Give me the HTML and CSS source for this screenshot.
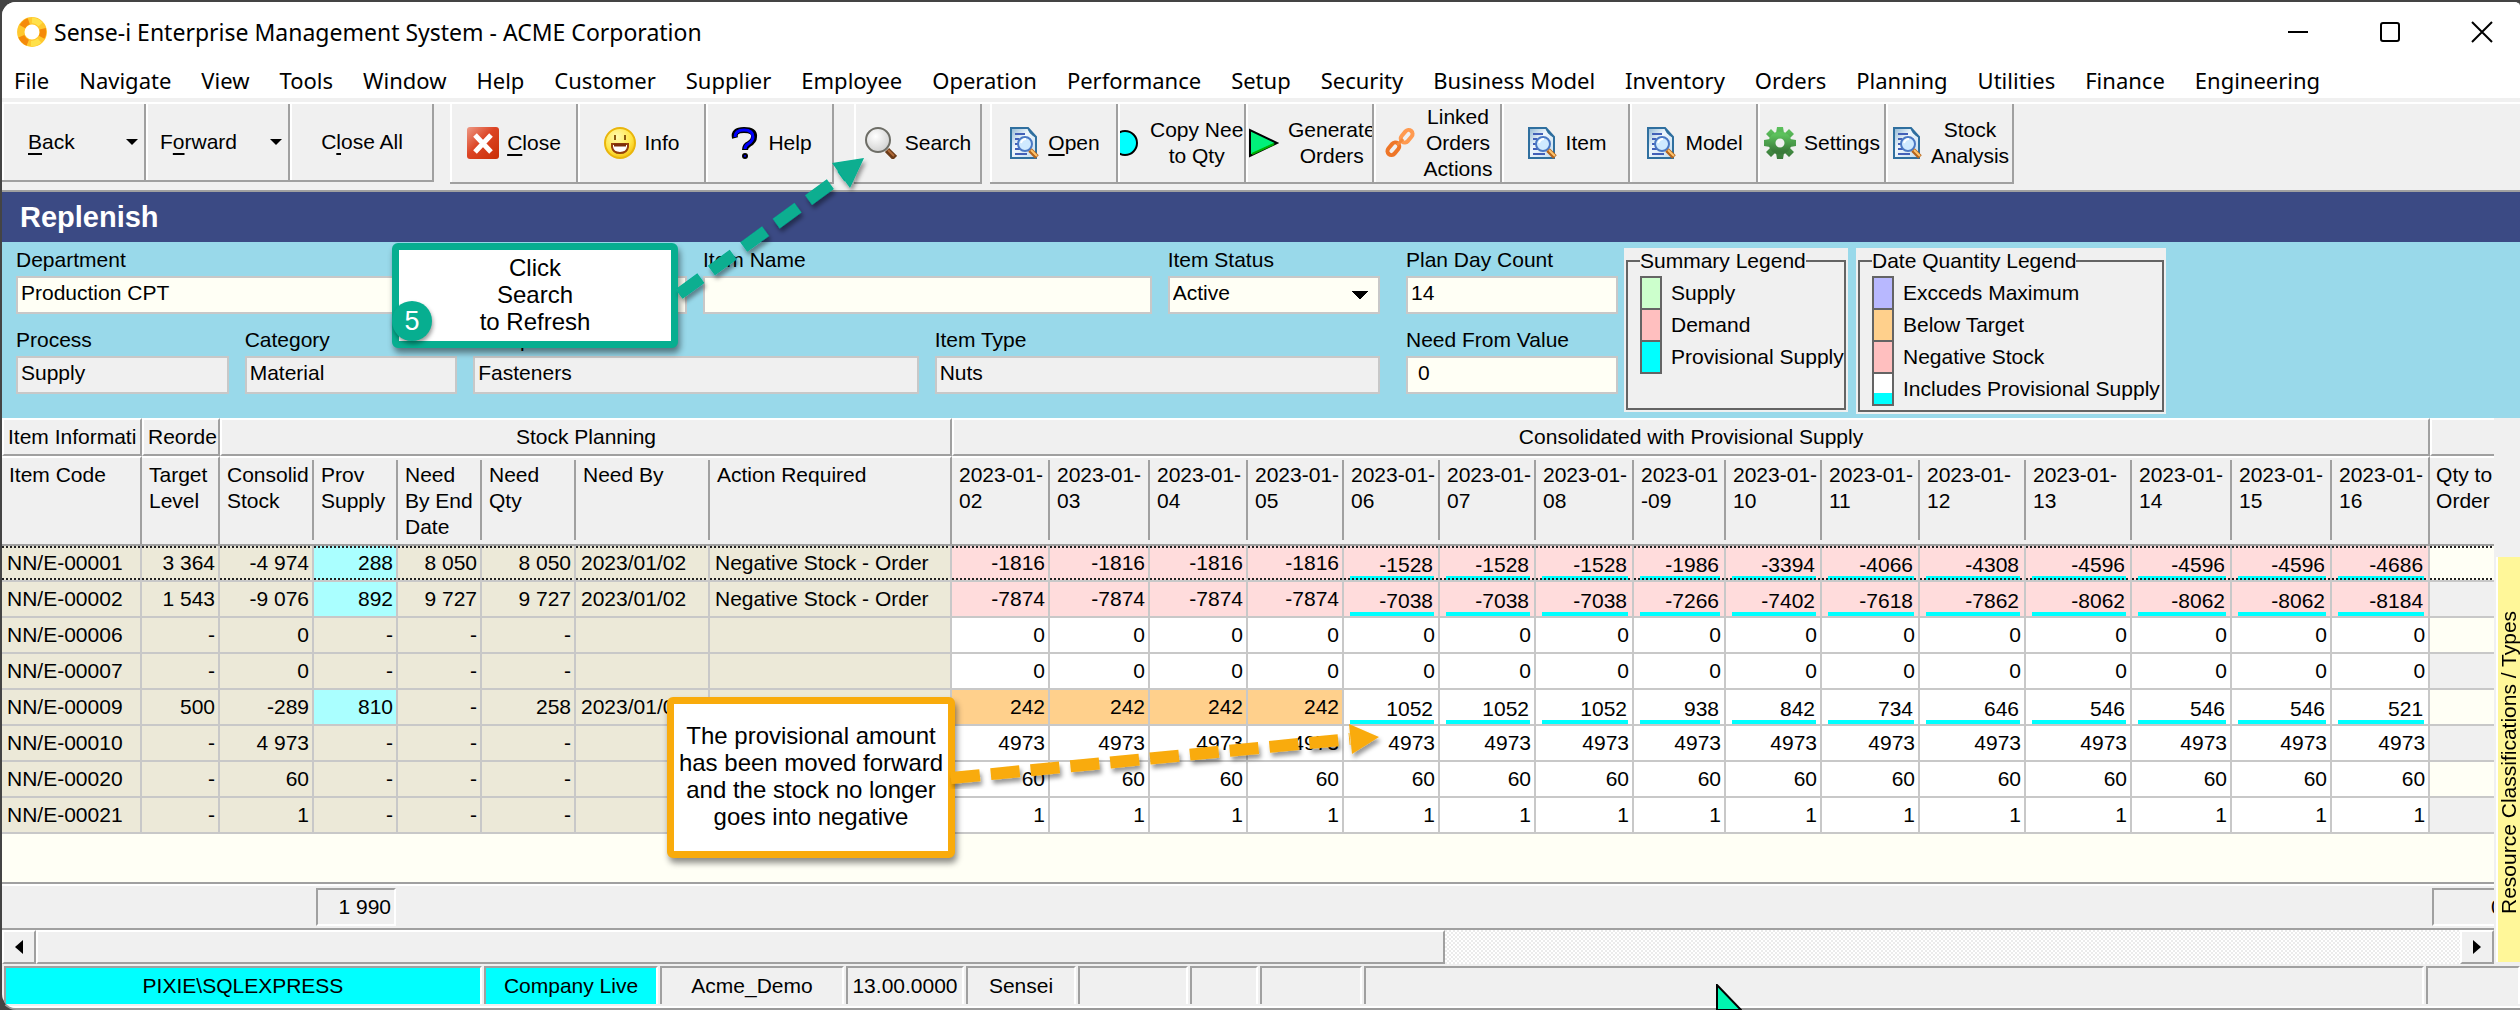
FILE: index.html
```
<!DOCTYPE html>
<html lang="en">
<head>
<meta charset="utf-8">
<title>Sense-i Enterprise Management System - ACME Corporation</title>
<link rel="stylesheet" href="styles.css">
</head>
<body>
<svg class="defs" aria-hidden="true">
  <defs>
    <linearGradient id="page" x1="0" y1="0" x2="1" y2="1"><stop offset="0" stop-color="#8fb6d3"/><stop offset=".4" stop-color="#eef6fc"/><stop offset="1" stop-color="#c4ddef"/></linearGradient>
    <linearGradient id="red" x1="0" y1="0" x2="1" y2="1"><stop offset="0" stop-color="#ee9a86"/><stop offset=".45" stop-color="#dc4424"/><stop offset="1" stop-color="#c92f06"/></linearGradient>
    <radialGradient id="face" cx=".4" cy=".3" r=".8"><stop offset="0" stop-color="#fffbb0"/><stop offset=".6" stop-color="#ffe545"/><stop offset="1" stop-color="#f2b705"/></radialGradient>
    <linearGradient id="green" x1="0" y1="0" x2="0" y2="1"><stop offset="0" stop-color="#5cc15c"/><stop offset="1" stop-color="#3a7a3a"/></linearGradient>
    <radialGradient id="glass" cx=".4" cy=".35" r=".7"><stop offset="0" stop-color="#fff"/><stop offset="1" stop-color="#cfcfcf"/></radialGradient>
    <filter id="shadow" x="-10%" y="-10%" width="125%" height="130%"><feDropShadow dx="2" dy="4" stdDeviation="2" flood-color="#000" flood-opacity=".4"/></filter>
  </defs>
  <symbol id="doc" viewBox="0 0 32 32">
    <path d="M3 1h17l8 9v21H3z" fill="url(#page)" stroke="#2f6f9f" stroke-width="2"/>
    <path d="M20 1c1 4 3 7 8 9" fill="#2f6f9f" stroke="#2f6f9f"/>
    <path d="M7 7h10M7 12h4M7 17h4M7 22h5M7 27h12" stroke="#4260b8" stroke-width="2"/>
    <circle cx="17" cy="17" r="7" fill="#cfeaff" stroke="#4a78c4" stroke-width="2"/>
    <path d="M13 16c1-3 3-4 5-4" stroke="#fff" stroke-width="2" fill="none"/>
    <path d="M22 23l7 7" stroke="#b5651d" stroke-width="5"/><path d="M23 23l6 6" stroke="#ffc56b" stroke-width="2"/>
  </symbol>
</svg>

<div class="window">
  <header class="titlebar">
    <svg class="logo" viewBox="0 0 30 30"><circle cx="15" cy="15" r="10.500" fill="none" stroke="#ffc82e" stroke-width="7"/><path d="M6 10a11 11 0 0 1 6-5M25 12a11 11 0 0 1-1 8M5 19a11 11 0 0 0 6 6" fill="none" stroke="#f58a0a" stroke-width="6"/><path d="M15 4a11 11 0 0 1 8 4M14 26a11 11 0 0 0 8-3" fill="none" stroke="#ffe14a" stroke-width="5"/></svg>
    <h1>Sense-i Enterprise Management System - ACME Corporation</h1>
    <div class="controls">
      <button aria-label="Minimize"><svg viewBox="0 0 22 22"><path d="M1 11h20" /></svg></button>
      <button aria-label="Maximize"><svg viewBox="0 0 22 22"><rect x="2" y="2" width="18" height="18" rx="2"/></svg></button>
      <button aria-label="Close window"><svg viewBox="0 0 22 22"><path d="M1 1l20 20M21 1L1 21"/></svg></button>
    </div>
  </header>

  <nav class="menu">
    <a href="#">File</a><a href="#">Navigate</a><a href="#">View</a><a href="#">Tools</a><a href="#">Window</a><a href="#">Help</a><a href="#">Customer</a><a href="#">Supplier</a><a href="#">Employee</a><a href="#">Operation</a><a href="#">Performance</a><a href="#">Setup</a><a href="#">Security</a><a href="#">Business Model</a><a href="#">Inventory</a><a href="#">Orders</a><a href="#">Planning</a><a href="#">Utilities</a><a href="#">Finance</a><a href="#">Engineering</a>
  </nav>

  <div class="toolbar">
    <div class="group history">
      <button class="drop"><span><u>B</u>ack</span><i></i></button>
      <button class="drop"><span>F<u>o</u>rward</span><i></i></button>
      <button><span>C<u>l</u>ose All</span></button>
    </div>
    <div class="group">
      <button><svg viewBox="0 0 32 32"><rect width="32" height="32" rx="3" fill="url(#red)"/><path d="M8 8l16 17M24 8L8 25" stroke="#fff" stroke-width="5"/></svg><span><u>C</u>lose</span></button>
      <button><svg viewBox="0 0 32 32"><circle cx="16" cy="16" r="15" fill="url(#face)" stroke="#e9b50c" stroke-width="2"/><path d="M11 8v5M21 8v5" stroke="#8a5a10" stroke-width="2"/><path d="M8 17h16v3q-1 6-8 6t-8-6z" fill="#fff" stroke="#96400c" stroke-width="2"/><path d="M10 18h12" stroke="#7c2c08" stroke-width="3"/></svg><span>Info</span></button>
      <button><svg viewBox="0 0 32 32"><path d="M7 11Q5 3 16 3t10 7q0 4-5 7-4 2-4 6" fill="none" stroke="#000" stroke-width="6"/><path d="M7 10Q7 3 16 3t9 7q0 4-5 7-3 2-3 5" fill="none" stroke="#00f" stroke-width="3"/><circle cx="17" cy="29" r="3"/><circle cx="17" cy="29" r="1" fill="#00f"/></svg><span>Help</span></button>
    </div>
    <div class="group">
      <button><svg viewBox="0 0 32 32"><path d="M22 23l8 8" stroke="#6b3b18" stroke-width="6"/><path d="M23 23l6 6" stroke="#b06a38" stroke-width="2"/><circle cx="13" cy="13" r="12" fill="url(#glass)" stroke="#6d6d66" stroke-width="2"/></svg><span>Search</span></button>
    </div>
    <div class="group">
      <button><svg><use href="#doc"/></svg><span><u>O</u>pen</span></button>
      <button class="start"><svg class="half" viewBox="0 0 18 32"><circle cx="5" cy="16" r="12" fill="#0ff" stroke="#000" stroke-width="2"/></svg><span>Copy Nee<br>to Qty</span></button>
      <button class="start"><svg viewBox="0 0 32 32"><path d="M2 3v26l27-13z" fill="#00f07a" stroke="#000" stroke-width="2"/><path d="M4 27l22-10" stroke="#00b000" stroke-width="2"/></svg><span>Generate<br>Orders</span></button>
      <button><svg viewBox="0 0 32 32"><g fill="none" stroke-width="4"><rect x="-4" y="-8" width="8" height="14" rx="4" transform="translate(22 10) rotate(40)" stroke="#ff9a50"/><rect x="-4" y="-6" width="8" height="14" rx="4" transform="translate(10 21) rotate(40)" stroke="#ee7628"/></g><path d="M13 18l6-6" stroke="#f58a3c" stroke-width="3"/></svg><span>Linked<br>Orders<br>Actions</span></button>
      <button><svg><use href="#doc"/></svg><span>Item</span></button>
      <button><svg><use href="#doc"/></svg><span>Model</span></button>
      <button><svg viewBox="-16 -16 32 32"><g fill="url(#green)"><path d="M-3-16h6l1 6h-8zM-3 16h6l1-6h-8zM-16-3v6l6 1v-8zM16-3v6l-6 1v-8z"/><path d="M-14-9l5-5 5 5-5 5zM14-9l-5-5-5 5 5 5zM-14 9l5 5 5-5-5-5zM14 9l-5 5-5-5 5-5z"/></g><circle r="8" fill="none" stroke="url(#green)" stroke-width="7"/></svg><span>Settings</span></button>
      <button><svg><use href="#doc"/></svg><span>Stock<br>Analysis</span></button>
    </div>
  </div>

  <h2>Replenish</h2>

  <form class="filters">
    <div class="fields">
      <div class="row">
        <label class="w-department">Department<input value="Production CPT"></label>
        <label class="w-name">Item Name<input value=""></label>
        <label class="w-small">Item Status<select><option>Active</option></select></label>
      </div>
      <div class="row">
        <label class="w-small">Process<input value="Supply" readonly></label>
        <label class="w-small">Category<input value="Material" readonly></label>
        <label class="w-type">Group<input value="Fasteners" readonly></label>
        <label class="w-type">Item Type<input value="Nuts" readonly></label>
      </div>
    </div>
    <div class="fields counts">
      <label>Plan Day Count<input value="14"></label>
      <label>Need From Value<input class="number" value="0"></label>
    </div>
    <div class="legend-panel summary">
      <fieldset><legend>Summary Legend</legend>
        <ul><li class="c-supply">Supply</li><li class="c-negative">Demand</li><li class="c-provisional">Provisional Supply</li></ul>
      </fieldset>
    </div>
    <div class="legend-panel dates">
      <fieldset><legend>Date Quantity Legend</legend>
        <ul><li class="c-exceeds">Excceds Maximum</li><li class="c-below">Below Target</li><li class="c-negative">Negative Stock</li><li class="c-includes">Includes Provisional Supply</li></ul>
      </fieldset>
    </div>
  </form>

  <main class="workspace">
    <section class="grid">
      <div class="sheet">
      <table>
        <colgroup><col class="w140"><col class="w78"><col class="w94"><col class="w84"><col class="w84"><col class="w94"><col class="w134"><col class="w242"><col class="w98"><col class="w100"><col class="w98"><col class="w96"><col class="w96"><col class="w96"><col class="w98"><col class="w92"><col class="w96"><col class="w98"><col class="w106"><col class="w106"><col class="w100"><col class="w100"><col class="w98"><col></colgroup>
        <thead>
          <tr class="bands"><th>Item Informati<th>Reorde<th colspan="6" class="mid">Stock Planning<th colspan="15" class="mid">Consolidated with Provisional Supply<th></tr>
          <tr class="heads"><th class="full">Item Code<th class="full">Target<br>Level<th>Consolid<br>Stock<th>Prov<br>Supply<th>Need<br>By End<br>Date<th>Need<br>Qty<th>Need By<th class="full">Action Required<th>2023-01-<br>02<th>2023-01-<br>03<th>2023-01-<br>04<th>2023-01-<br>05<th>2023-01-<br>06<th>2023-01-<br>07<th>2023-01-<br>08<th>2023-01<br>-09<th>2023-01-<br>10<th>2023-01-<br>11<th>2023-01-<br>12<th>2023-01-<br>13<th>2023-01-<br>14<th>2023-01-<br>15<th class="full">2023-01-<br>16<th class="last">Qty to<br>Order</tr>
        </thead>
        <tbody>
          <tr class="focus"><td>NN/E-00001<td>3 364<td>-4 974<td class="p">288<td>8 050<td>8 050<td>2023/01/02<td>Negative Stock - Order<td class="n">-1816<td class="n">-1816<td class="n">-1816<td class="n">-1816<td class="n i">-1528<td class="n i">-1528<td class="n i">-1528<td class="n i">-1986<td class="n i">-3394<td class="n i">-4066<td class="n i">-4308<td class="n i">-4596<td class="n i">-4596<td class="n i">-4596<td class="n i">-4686<td></tr>
          <tr><td>NN/E-00002<td>1 543<td>-9 076<td class="p">892<td>9 727<td>9 727<td>2023/01/02<td>Negative Stock - Order<td class="n">-7874<td class="n">-7874<td class="n">-7874<td class="n">-7874<td class="n i">-7038<td class="n i">-7038<td class="n i">-7038<td class="n i">-7266<td class="n i">-7402<td class="n i">-7618<td class="n i">-7862<td class="n i">-8062<td class="n i">-8062<td class="n i">-8062<td class="n i">-8184<td></tr>
          <tr><td>NN/E-00006<td>-<td>0<td>-<td>-<td>-<td><td><td>0<td>0<td>0<td>0<td>0<td>0<td>0<td>0<td>0<td>0<td>0<td>0<td>0<td>0<td>0<td></tr>
          <tr><td>NN/E-00007<td>-<td>0<td>-<td>-<td>-<td><td><td>0<td>0<td>0<td>0<td>0<td>0<td>0<td>0<td>0<td>0<td>0<td>0<td>0<td>0<td>0<td></tr>
          <tr><td>NN/E-00009<td>500<td>-289<td class="p">810<td>-<td>258<td>2023/01/02<td><td class="b">242<td class="b">242<td class="b">242<td class="b">242<td class="i">1052<td class="i">1052<td class="i">1052<td class="i">938<td class="i">842<td class="i">734<td class="i">646<td class="i">546<td class="i">546<td class="i">546<td class="i">521<td></tr>
          <tr><td>NN/E-00010<td>-<td>4 973<td>-<td>-<td>-<td><td><td>4973<td>4973<td>4973<td>4973<td>4973<td>4973<td>4973<td>4973<td>4973<td>4973<td>4973<td>4973<td>4973<td>4973<td>4973<td></tr>
          <tr><td>NN/E-00020<td>-<td>60<td>-<td>-<td>-<td><td><td>60<td>60<td>60<td>60<td>60<td>60<td>60<td>60<td>60<td>60<td>60<td>60<td>60<td>60<td>60<td></tr>
          <tr><td>NN/E-00021<td>-<td>1<td>-<td>-<td>-<td><td><td>1<td>1<td>1<td>1<td>1<td>1<td>1<td>1<td>1<td>1<td>1<td>1<td>1<td>1<td>1<td></tr>
        </tbody>
      </table>
      </div>
      <div class="totals"><output class="supply-total">1 990</output><output class="order-total">0</output></div>
      <div class="scrollbar"><button aria-label="Scroll left"><svg viewBox="0 0 10 16"><path d="M9 1v14L1 8z"/></svg></button><div class="thumb"></div><div class="track"></div><button aria-label="Scroll right"><svg viewBox="0 0 10 16"><path d="M1 1v14l8-7z"/></svg></button></div>
    </section>
    <aside><button class="side-tab">Resource Classifications / Types</button></aside>
  </main>

  <footer class="status">
    <span class="on s-server">PIXIE\SQLEXPRESS</span><span class="on s-company">Company Live</span><span class="s-database">Acme_Demo</span><span class="s-version">13.00.0000</span><span class="s-user">Sensei</span><span class="s-user"></span><span class="s-narrow"></span><span class="s-flag"></span><span class="s-rest"></span><span class="s-end"></span>
  </footer>
</div>

<div class="callout refresh">Click<br>Search<br>to Refresh<b>5</b></div>
<div class="callout moved">The provisional amount<br>has been moved forward<br>and the stock no longer<br>goes into negative</div>
<svg class="arrow refresh-arrow" viewBox="0 0 200 150"><g filter="url(#shadow)" fill="#07ae90"><path d="M7 144L171 25" stroke="#07ae90" stroke-width="12" stroke-dasharray="27 13"/><path d="M192 8l-32 5 18 25z"/></g></svg>
<svg class="arrow moved-arrow" viewBox="0 0 440 80"><g filter="url(#shadow)" fill="#f9ab0b"><path d="M3 59L402 20" stroke="#f9ab0b" stroke-width="12" stroke-dasharray="29 11"/><path d="M431 18L401 5l3 30z"/></g></svg>
<svg class="pointer" viewBox="0 0 26 26"><path d="M1 1v25h24z" fill="#00f5b0" stroke="#000" stroke-width="2"/></svg>
</body>
</html>
```
FILE: styles.css
```
* { box-sizing: border-box; }
html { overflow: hidden; }
body {
  margin: 0;
  background: #444;
  color: #000;
  font: 21px/26px "Liberation Sans", Arial, sans-serif;
  position: relative;
}
button, input, select { font: inherit; color: inherit; margin: 0; }
button { background: none; border: 0; padding: 0; }
.defs { position: absolute; width: 0; height: 0; }

.window {
  min-height: 100vh;
  display: flex;
  flex-direction: column;
  border: solid #444;
  border-width: 2px 0 2px 2px;
  border-bottom-color: #9a9a9a;
  border-radius: 16px 6px 0 16px;
  overflow: hidden;
  background: #f0f0f0;
}

/* Title bar and menu */
.titlebar { display: flex; align-items: center; gap: 6px; height: 60px; padding: 0 16px 0 14px; background: #fff; }
.titlebar h1 { margin: 0; flex: 1; font: 23px/30px "Noto Sans", sans-serif; }
.logo { width: 32px; height: 32px; }
.controls { display: flex; gap: 48px; }
.controls button { width: 44px; height: 40px; display: grid; place-items: center; }
.controls svg { width: 22px; height: 22px; fill: none; stroke: #000; stroke-width: 2; }
.menu { display: flex; gap: 30px; height: 36px; padding: 0 12px; background: #fff; font: 22px/36px "Noto Sans", sans-serif; }
.menu a { color: inherit; text-decoration: none; white-space: nowrap; }

/* Toolbar */
.toolbar { display: flex; align-items: flex-start; margin-top: 4px; height: 90px; border-top: 2px solid #fff; border-bottom: 2px solid #a0a0a0; }
.group { display: flex; height: 80px; border-bottom: 2px solid #a0a0a0; margin-left: 8px; }
.group:nth-child(-n+2) { margin-left: 0; }
.group:nth-child(2) { margin-left: 16px; }
.group:nth-child(3) { margin-left: 20px; }
.group button { width: 128px; display: flex; align-items: center; justify-content: center; gap: 8px; border-left: 2px solid #fff; border-right: 2px solid #a0a0a0; overflow: hidden; white-space: nowrap; }
.group svg { width: 32px; height: 32px; flex: none; }
.group .half { width: 18px; }
.group .half + span { margin-left: 4px; }
.group .start { justify-content: flex-start; }
.group u { text-underline-offset: 4px; text-decoration-thickness: 2px; }
.history { height: 78px; }
.history button { width: 144px; }
.history .drop { justify-content: space-between; padding: 0 6px 0 24px; }
.history .drop + .drop { padding-left: 12px; }
.history i { border: solid transparent; border-width: 6px 6px 0; border-top-color: #000; }

h2 { margin: 0; height: 50px; padding-left: 18px; background: #3b4a84; color: #fff; font-size: 29px; line-height: 50px; }

/* Filters */
.filters { display: flex; align-items: flex-start; height: 176px; padding: 4px 14px 0; background: #99d9ea; white-space: nowrap; }
.fields { flex: 0 1 1364px; display: flex; flex-direction: column; gap: 12px; }
.counts { flex-basis: 212px; margin-left: 26px; }
.row { display: flex; gap: 16px; }
label { display: flex; flex-direction: column; min-width: 0; line-height: 28px; }
label input, label select { width: 100%; height: 38px; margin-top: 2px; padding: 0 4px 4px 3px; border: 2px solid #c8c8c8; border-radius: 0; background: #fffff5; }
label input[readonly] { background: #f0f0f0; }
.counts .number { padding-left: 10px; }
label select { appearance: none; background: linear-gradient(to bottom right, #000 50%, transparent 51%) no-repeat right 10px center / 8px 8px, linear-gradient(to bottom left, #000 50%, transparent 51%) no-repeat right 18px center / 8px 8px, #fffff5; }
.w-department { flex: 670 1 0; }
.w-name { flex: 448 1 0; }
.w-small { flex: 212 1 0; }
.w-type { flex: 444 1 0; }

.legend-panel { height: 164px; margin: 2px 0 0 6px; padding: 0 2px 2px; background: #f0f0f0; }
.summary { flex: 0 1 224px; }
.dates { flex: 0 1 310px; height: 166px; margin-left: 8px; }
fieldset { height: 100%; min-width: 0; margin: 0; padding: 0 0 0 12px; border: 2px solid #646464; }
legend { padding: 0; line-height: 26px; }
.legend-panel ul { list-style: none; margin: 2px 0 0; padding: 0; display: flex; flex-direction: column; }
.legend-panel li { display: flex; gap: 9px; height: 34px; margin-bottom: -2px; line-height: 34px; }
.legend-panel li::before { content: ""; width: 18px; border: 2px solid #646464; background: var(--swatch); }
.c-supply { --swatch: #ccffcc; }
.c-negative { --swatch: #ffbfbf; }
.c-provisional { --swatch: #00ffff; }
.c-exceeds { --swatch: #b8b8ff; }
.c-below { --swatch: #ffd08c; }
.c-includes { --swatch: linear-gradient(#fff 64%, #0ff 0); }

/* Planning grid */
.workspace { flex: 1; display: flex; }
.grid { flex: 1; min-width: 0; display: flex; flex-direction: column; }
.sheet { flex: 1; background: #fffff5; border-bottom: 2px solid #a0a0a0; overflow: hidden; }
table { width: 100%; table-layout: fixed; border-spacing: 0; }
.w140 { width: 140px; } .w78 { width: 78px; } .w94 { width: 94px; } .w84 { width: 84px; }
.w134 { width: 134px; } .w242 { width: 242px; } .w92 { width: 92px; } .w96 { width: 96px; }
.w98 { width: 98px; } .w100 { width: 100px; } .w106 { width: 106px; }
th { padding: 0 0 0 4px; font-weight: normal; text-align: left; vertical-align: top; white-space: nowrap; overflow: hidden; background: #f0f0f0; border-top: 2px solid #fff; border-bottom: 2px solid #a0a0a0; }
.bands th { height: 38px; line-height: 34px; border-left: 2px solid #fff; border-right: 2px solid #a0a0a0; }
.bands .mid { text-align: center; padding: 0; }
.heads th { height: 90px; padding: 4px 0 0 7px; line-height: 26px; background: #f0f0f0 linear-gradient(#a0a0a0, #a0a0a0) no-repeat right 2px / 2px 80px; }
.heads .full { background-image: none; border-right: 2px solid #a0a0a0; }
.heads .last { padding-left: 6px; background-image: none; }
.bands th:last-child { border-right: 0; }
td { position: relative; height: 36px; padding: 0 3px; text-align: right; white-space: nowrap; overflow: hidden; background: #fff; border-right: 2px solid #c8c8c8; border-bottom: 2px solid #c8c8c8; }
td:nth-child(-n+8) { background: #ece9d8; }
td:nth-child(1), td:nth-child(7), td:nth-child(8) { text-align: left; padding-left: 5px; }
td:last-child { background: #fffff5; border-right: 0; }
tr:nth-child(even) td:last-child { background: #f0f0f0; }
tr td.p { background: #aaffff; }
td.n { background: #ffdcdc; }
td.b { background: #ffd08c; }
td.i { padding: 4px 5px 0 0; background-image: linear-gradient(#0ff, #0ff); background-repeat: no-repeat; background-position: 6px 100%; background-size: calc(100% - 10px) 4px; }
.focus td::after { content: ""; position: absolute; inset: 0; background: repeating-linear-gradient(90deg, #222 0 2px, transparent 2px 4px) top / 100% 2px no-repeat, repeating-linear-gradient(90deg, #222 0 2px, transparent 2px 4px) bottom / 100% 2px no-repeat; }

.totals { display: grid; grid-template-columns: 80px 62px; justify-content: space-between; height: 46px; padding: 2px 0 2px 314px; border-top: 2px solid #fff; border-bottom: 2px solid #a0a0a0; }
.totals output { height: 38px; line-height: 34px; text-align: right; padding-right: 3px; border: 2px solid #fff; border-top-color: #a0a0a0; border-left-color: #a0a0a0; overflow: hidden; }
.totals .order-total { text-align: left; padding: 0 0 0 57px; border-right: 0; }

.scrollbar { display: flex; height: 34px; }
.scrollbar button, .thumb { border: 2px solid #fff; border-right-color: #a0a0a0; border-bottom-color: #a0a0a0; }
.scrollbar button { flex: none; width: 34px; display: grid; place-items: center; }
.scrollbar svg { width: 10px; height: 16px; }
.thumb { flex: 1408; }
.track { flex: 1018; background: repeating-conic-gradient(#fff 0 25%, #ebebeb 0 50%) 0 0 / 4px 4px; }

aside { width: 26px; padding: 139px 0 2px 2px; display: flex; }
.side-tab { flex: none; width: 24px; overflow: hidden; writing-mode: vertical-rl; transform: rotate(180deg); background: #fff799; border-right: 2px solid #fff; line-height: 20px; text-align: left; padding-top: 48px; }

/* Status bar */
.status { display: flex; gap: 2px; height: 44px; padding: 2px 0 2px 2px; text-align: center; white-space: nowrap; border-bottom: 2px solid #fff; }
.status span { border: 2px solid #a0a0a0; border-right-color: #fff; border-bottom: 0; line-height: 36px; }
.status .on { background: #0ff; }
.s-server { width: 478px; } .s-company { width: 174px; } .s-database { width: 184px; } .s-version { width: 118px; }
.s-user { width: 110px; } .s-narrow { width: 68px; } .s-flag { width: 102px; } .s-rest { flex: 1; } .s-end { width: 94px; }

/* Annotations over the window */
.callout { position: absolute; display: grid; place-content: center; padding-bottom: 3px; background: #fff; border: 7px solid #07ae90; border-radius: 6px; box-shadow: 2px 5px 6px rgba(0, 0, 0, .45); font-size: 24px; line-height: 27px; text-align: center; white-space: nowrap; }
.refresh { left: 392px; top: 243px; width: 286px; height: 105px; }
.refresh b { position: absolute; left: -7px; bottom: 0; width: 40px; height: 40px; border-radius: 50%; background: #07ae90; color: #fff; font: 27px/40px "Liberation Sans", Arial, sans-serif; box-shadow: 1px 3px 4px rgba(0, 0, 0, .4); }
.moved { left: 667px; top: 697px; width: 288px; height: 161px; border-color: #f9ab0b; }
.arrow { position: absolute; overflow: visible; }
.refresh-arrow { left: 672px; top: 150px; width: 200px; height: 150px; }
.moved-arrow { left: 948px; top: 719px; width: 440px; height: 80px; }
.pointer { position: absolute; left: 1716px; top: 984px; width: 26px; height: 26px; }
```
